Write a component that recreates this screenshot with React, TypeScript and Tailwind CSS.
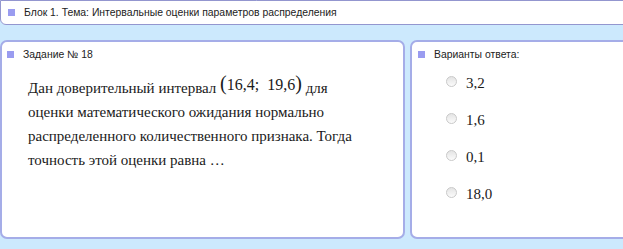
const sans = { fontFamily: '"Liberation Sans", Arial, sans-serif' };
const serif = { fontFamily: '"Liberation Serif", "Times New Roman", serif' };

const Bullet = () => <span className="inline-block w-[7px] h-[7px] bg-[#9a9cf0] shrink-0" />;

const Radio = () => (
  <span className="inline-block w-[11px] h-[11px] rounded-full border border-[#c9c9c9] bg-gradient-to-b from-[#e4e4e4] to-[#fbfbfb] shrink-0" />
);

const answers = ["3,2", "1,6", "0,1", "18,0"];

export default function App() {
  return (
    <div className="w-[623px] h-[249px] overflow-hidden bg-[#cce9fd] flex flex-col">
      {/* top bar */}
      <div
        className="h-[25px] mr-[-8px] bg-white border border-[#9396cf] rounded-b-[6px] flex items-center gap-[9px] pl-[7px] text-[10.4px] text-[#222]"
        style={sans}
      >
        <Bullet />
        <span>Блок 1. Тема: Интервальные оценки параметров распределения</span>
      </div>

      <div className="flex gap-[5px] mt-[15px] h-[199px]">
        {/* question */}
        <div className="w-[405px] bg-white border-2 border-[#a5ade8] rounded-[7px] flex flex-col">
          <div className="flex items-center gap-[9px] pl-[5px] pt-[5px] text-[10.4px] text-[#222]" style={sans}>
            <Bullet />
            <span>Задание № 18</span>
          </div>
          <p className="pl-[26px] pr-2 mt-[11px] text-[15px] leading-[24px] text-[#1a1a1a]" style={serif}>
            Дан доверительный интервал{" "}
            <span className="inline-block text-[16px] relative top-[-3px]">
              <span className="text-[20px]">(</span>16,4;&nbsp; 19,6<span className="text-[20px]">)</span>
            </span>{" "}
            для
            <br />
            оценки математического ожидания нормально
            <br />
            распределенного количественного признака. Тогда
            <br />
            точность этой оценки равна …
          </p>
        </div>

        {/* answers */}
        <div className="flex-1 mr-[-10px] bg-white border-2 border-[#a5ade8] rounded-[7px] flex flex-col">
          <div className="flex items-center gap-[9px] pl-[6px] pt-[5px] text-[10.4px] text-[#222]" style={sans}>
            <Bullet />
            <span>Варианты ответа:</span>
          </div>
          <div className="flex flex-col gap-[20px] pl-[34px] mt-[10px]">
            {answers.map((a) => (
              <label key={a} className="flex items-center gap-[9px] h-[17px] text-[15px] text-[#1a1a1a]" style={serif}>
                <Radio />
                <span className="relative top-[2px]">{a}</span>
              </label>
            ))}
          </div>
        </div>
      </div>
    </div>
  );
}
